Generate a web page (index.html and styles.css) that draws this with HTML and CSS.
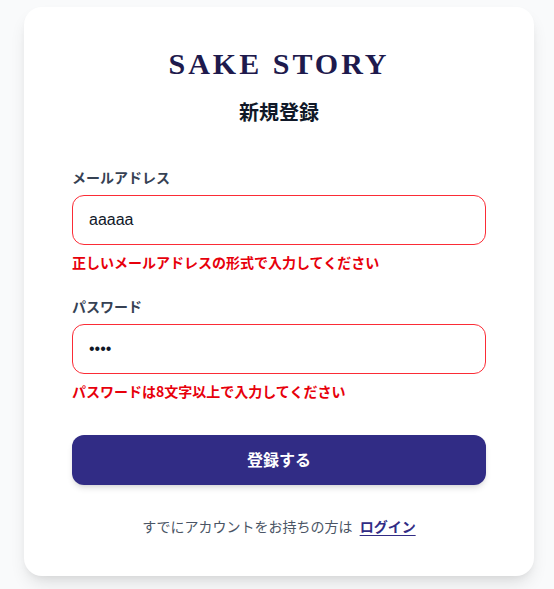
FILE: index.html
```html
<!DOCTYPE html>
<html lang="ja">
<head>
<meta charset="utf-8">
<title>新規登録 | SAKE STORY</title>
<link rel="stylesheet" href="styles.css">
</head>
<body>
<main class="page">
  <section class="card">
    <h1 class="brand">SAKE STORY</h1>
    <h2 class="title">新規登録</h2>
    <form class="form">
      <div class="field">
        <label class="label" for="email">メールアドレス</label>
        <input class="input input-error" id="email" type="text" value="aaaaa">
        <p class="error">正しいメールアドレスの形式で入力してください</p>
      </div>
      <div class="field">
        <label class="label" for="password">パスワード</label>
        <input class="input input-error" id="password" type="password" value="aaaa">
        <p class="error">パスワードは8文字以上で入力してください</p>
      </div>
      <button class="submit" type="button">登録する</button>
    </form>
    <p class="footer">すでにアカウントをお持ちの方は <a class="link" href="#">ログイン</a></p>
  </section>
</main>
</body>
</html>
```

FILE: styles.css
```css
* { box-sizing: border-box; }
html, body { margin: 0; padding: 0; }
body {
  background: #f9fafb;
  font-family: "Noto Sans CJK JP", "Noto Sans", sans-serif;
  color: #101828;
}
.page {
  padding: 7px 20px 13px 24px;
}
.card {
  width: 510px;
  background: #ffffff;
  border-radius: 18px;
  padding: 39px 48px 40px;
  box-shadow: 0 10px 18px -4px rgba(0,0,0,0.12), 0 4px 8px -4px rgba(0,0,0,0.08);
}
.brand {
  margin: 0;
  text-align: center;
  font-family: "Liberation Serif", "Times New Roman", serif;
  font-weight: 700;
  font-size: 30px;
  line-height: 36px;
  letter-spacing: 0.1em;
  color: #1e1a4d;
}
.title {
  margin: 16px 0 0;
  text-align: center;
  font-size: 20px;
  line-height: 28px;
  font-weight: 700;
  color: #101828;
}
.form {
  margin-top: 41px;
  display: flex;
  flex-direction: column;
}
.field {
  display: flex;
  flex-direction: column;
  margin-bottom: 24px;
}
.label {
  font-size: 14px;
  line-height: 20px;
  font-weight: 700;
  color: #364153;
  margin-bottom: 8px;
}
.input {
  width: 100%;
  height: 50px;
  padding: 12px 16px;
  font-family: "Liberation Sans", Arial, sans-serif;
  font-size: 16px;
  line-height: 24px;
  color: #101828;
  border: 1px solid #d1d5dc;
  border-radius: 12px;
  outline: none;
  background: #fff;
}
.input-error {
  border-color: #fb2c36;
}
.error {
  margin: 7px 0 0;
  font-size: 14px;
  line-height: 20px;
  font-weight: 700;
  color: #e7000b;
}
.submit {
  margin-top: 10px;
  height: 50px;
  padding: 0 0 3px;
  border: none;
  border-radius: 12px;
  background: #312c85;
  color: #ffffff;
  font-family: "Noto Sans CJK JP", "Noto Sans", sans-serif;
  font-size: 16px;
  font-weight: 700;
  box-shadow: 0 4px 6px -1px rgba(0,0,0,0.12), 0 2px 4px -2px rgba(0,0,0,0.1);
}
.footer {
  margin: 31px 0 0;
  text-align: center;
  font-size: 14px;
  line-height: 20px;
  color: #4a5565;
}
.link {
  margin-left: 4px;
  font-weight: 700;
  color: #312c85;
  text-decoration: underline;
  text-underline-offset: 3px;
}
```
